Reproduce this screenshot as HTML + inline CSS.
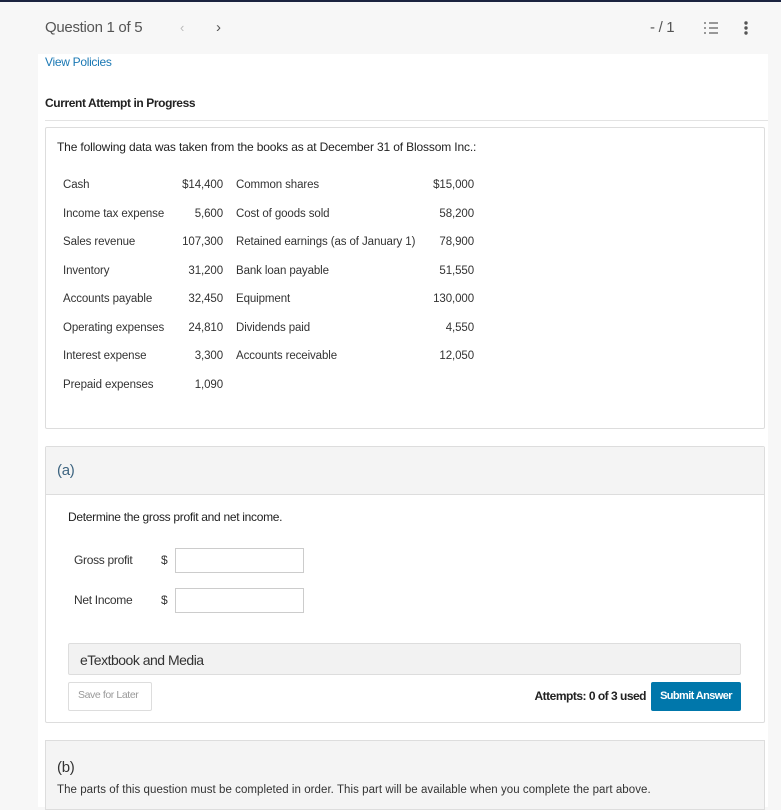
<!DOCTYPE html>
<html><head><style>
*{margin:0;padding:0;box-sizing:border-box}
body{width:781px;height:807px;background:#f7f7f7;font-family:"Liberation Sans",sans-serif;color:#333;position:relative;overflow:hidden;letter-spacing:-0.3px}
.a{position:absolute;white-space:nowrap}
.r{text-align:right}
</style></head><body>
<div class="a" style="left:0;top:0;width:781px;height:2px;background:#1b2440"></div>
<div class="a" style="left:38px;top:54px;width:730px;height:753px;background:#fff"></div>
<div class="a" style="left:45px;top:19px;font-size:15px;color:#555">Question 1 of 5</div>
<div class="a" style="left:180px;top:20px;font-size:13px;color:#bbb">&lsaquo;</div>
<div class="a" style="left:216px;top:19px;font-size:15px;color:#555">&rsaquo;</div>
<div class="a" style="left:650px;top:19px;font-size:15px;color:#555">- / 1</div>
<svg class="a" style="left:704px;top:21px" width="14" height="14"><g stroke="#666" stroke-width="1.3"><line x1="5" y1="2" x2="14" y2="2"/><line x1="5" y1="7" x2="14" y2="7"/><line x1="5" y1="12" x2="14" y2="12"/><line x1="1" y1="1" x2="1" y2="3"/><line x1="1" y1="6" x2="1" y2="8"/><line x1="1" y1="11" x2="1" y2="13"/></g></svg>
<svg class="a" style="left:743px;top:20px" width="6" height="16"><circle cx="3" cy="3" r="1.7" fill="#555"/><circle cx="3" cy="8" r="1.7" fill="#555"/><circle cx="3" cy="13" r="1.7" fill="#555"/></svg>
<div class="a" style="left:45px;top:55px;font-size:12px;color:#1a78b4">View Policies</div>
<div class="a" style="left:45px;top:96px;font-size:12px;color:#222;font-weight:bold;letter-spacing:-0.4px">Current Attempt in Progress</div>
<div class="a" style="left:45px;top:120px;width:723px;height:1px;background:#e3e3e3"></div>

<div class="a" style="left:45px;top:127px;width:720px;height:302px;border:1px solid #ddd;border-radius:2px"></div>
<div class="a" style="left:57px;top:140px;font-size:12px;color:#222;letter-spacing:-0.15px">The following data was taken from the books as at December 31 of Blossom Inc.:</div>
<div style="font-size:11.5px;color:#333;letter-spacing:-0.1px">
<div class="a" style="left:63px;top:179px">Cash</div><div class="a r" style="left:150px;width:73px;top:179px">$14,400</div><div class="a" style="left:236px;top:179px">Common shares</div><div class="a r" style="left:400px;width:74px;top:179px">$15,000</div>
<div class="a" style="left:63px;top:208px">Income tax expense</div><div class="a r" style="left:150px;width:73px;top:208px">5,600</div><div class="a" style="left:236px;top:208px">Cost of goods sold</div><div class="a r" style="left:400px;width:74px;top:208px">58,200</div>
<div class="a" style="left:63px;top:236px">Sales revenue</div><div class="a r" style="left:150px;width:73px;top:236px">107,300</div><div class="a" style="left:236px;top:236px">Retained earnings (as of January 1)</div><div class="a r" style="left:400px;width:74px;top:236px">78,900</div>
<div class="a" style="left:63px;top:265px">Inventory</div><div class="a r" style="left:150px;width:73px;top:265px">31,200</div><div class="a" style="left:236px;top:265px">Bank loan payable</div><div class="a r" style="left:400px;width:74px;top:265px">51,550</div>
<div class="a" style="left:63px;top:293px">Accounts payable</div><div class="a r" style="left:150px;width:73px;top:293px">32,450</div><div class="a" style="left:236px;top:293px">Equipment</div><div class="a r" style="left:400px;width:74px;top:293px">130,000</div>
<div class="a" style="left:63px;top:322px">Operating expenses</div><div class="a r" style="left:150px;width:73px;top:322px">24,810</div><div class="a" style="left:236px;top:322px">Dividends paid</div><div class="a r" style="left:400px;width:74px;top:322px">4,550</div>
<div class="a" style="left:63px;top:350px">Interest expense</div><div class="a r" style="left:150px;width:73px;top:350px">3,300</div><div class="a" style="left:236px;top:350px">Accounts receivable</div><div class="a r" style="left:400px;width:74px;top:350px">12,050</div>
<div class="a" style="left:63px;top:379px">Prepaid expenses</div><div class="a r" style="left:150px;width:73px;top:379px">1,090</div>
</div>

<div class="a" style="left:45px;top:446px;width:720px;height:277px;border:1px solid #ddd;border-radius:2px"></div>
<div class="a" style="left:46px;top:447px;width:718px;height:48px;background:#f4f4f4;border-bottom:1px solid #ddd"></div>
<div class="a" style="left:57px;top:462px;font-size:15px;color:#3d6480">(a)</div>
<div class="a" style="left:68px;top:510px;font-size:12px;color:#222;letter-spacing:-0.3px">Determine the gross profit and net income.</div>
<div class="a" style="left:74px;top:553px;font-size:12px">Gross profit</div>
<div class="a" style="left:161px;top:553px;font-size:12px">$</div>
<div class="a" style="left:175px;top:548px;width:129px;height:25px;border:1px solid #ccc"></div>
<div class="a" style="left:74px;top:593px;font-size:12px">Net Income</div>
<div class="a" style="left:161px;top:593px;font-size:12px">$</div>
<div class="a" style="left:175px;top:588px;width:129px;height:25px;border:1px solid #ccc"></div>
<div class="a" style="left:68px;top:643px;width:673px;height:32px;background:#f2f2f2;border:1px solid #ddd;border-radius:2px"></div>
<div class="a" style="left:80px;top:652px;font-size:14px;color:#333;letter-spacing:-0.5px">eTextbook and Media</div>
<div class="a" style="left:68px;top:682px;width:84px;height:29px;border:1px solid #ddd;border-radius:2px;background:#fff"></div>
<div class="a" style="left:78px;top:689px;font-size:10.5px;color:#999;letter-spacing:-0.4px">Save for Later</div>
<div class="a r" style="left:480px;width:166px;top:689px;font-size:12px;font-weight:bold;color:#222;letter-spacing:-0.5px">Attempts: 0 of 3 used</div>
<div class="a" style="left:651px;top:682px;width:90px;height:29px;background:#0077ab;border-radius:2px"></div>
<div class="a" style="left:651px;width:90px;text-align:center;top:690px;font-size:11px;color:#fff;font-weight:bold;letter-spacing:-0.6px">Submit Answer</div>

<div class="a" style="left:45px;top:740px;width:720px;height:70px;background:#f4f4f4;border:1px solid #ddd"></div>
<div class="a" style="left:57px;top:759px;font-size:15px;color:#333">(b)</div>
<div class="a" style="left:57px;top:784px;font-size:11.5px;color:#333;letter-spacing:0.05px">The parts of this question must be completed in order. This part will be available when you complete the part above.</div>
</body></html>
